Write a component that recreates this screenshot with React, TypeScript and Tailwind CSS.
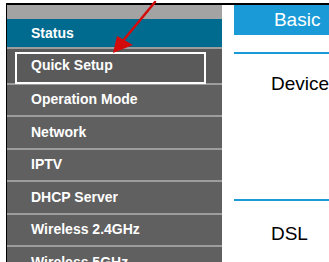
const menu = [
  'Operation Mode',
  'Network',
  'IPTV',
  'DHCP Server',
  'Wireless 2.4GHz',
  'Wireless 5GHz',
];

function MenuRow({ label, tall }: { label: string; tall?: boolean }) {
  return (
    <div
      className={`flex items-center border-t-2 border-[#9d9d9d] pl-[24px] text-[14px] font-bold text-white ${
        tall ? 'h-[35.5px] bg-[#5a5a5a]' : 'h-[32.5px] bg-[#606060]'
      }`}
    >
      {label}
    </div>
  );
}

export default function App() {
  return (
    <div
      className="relative h-[262px] w-[329px] overflow-hidden bg-white"
      style={{ fontFamily: '"Liberation Sans", Arial, sans-serif' }}
    >
      <div className="ml-[6px] mt-[3px] flex h-[300px] border-l border-t-2 border-black">
        {/* sidebar */}
        <div className="flex w-[216px] flex-col">
          <div className="h-[14px] bg-[#a3a3a3]" />
          <div className="flex h-[28px] items-center bg-[#016a8f] pl-[24px] text-[14px] font-bold text-white">
            Status
          </div>
          <MenuRow label="Quick Setup" tall />
          {menu.map((m) => (
            <MenuRow key={m} label={m} />
          ))}
        </div>

        {/* content */}
        <div className="ml-[12px] flex flex-1 flex-col">
          <div className="flex h-[30px] items-center bg-[#1a9bd7] pl-[40px] text-[19px] text-white">
            Basic
          </div>
          <div className="mt-[17px] h-[2px] bg-[#1a9bd7]" />
          <div className="mt-[19px] pl-[37px] text-[19px] leading-[22px] text-black">Device</div>
          <div className="mt-[104px] h-[2px] bg-[#1a9bd7]" />
          <div className="mt-[22px] pl-[37px] text-[19px] leading-[22px] text-black">DSL</div>
        </div>
      </div>

      {/* annotation: highlight box */}
      <div className="pointer-events-none absolute left-[15px] top-[52px] h-[32px] w-[191px] border-2 border-white" />

      {/* annotation: red arrow */}
      <svg className="pointer-events-none absolute left-0 top-0" width="329" height="262" viewBox="0 0 329 262">
        <line x1="155" y1="2" x2="122" y2="42" stroke="#d40b0b" strokeWidth="2.5" strokeLinecap="round" />
        <polygon points="113,53 117,36 133,45" fill="#d40b0b" />
      </svg>
    </div>
  );
}
